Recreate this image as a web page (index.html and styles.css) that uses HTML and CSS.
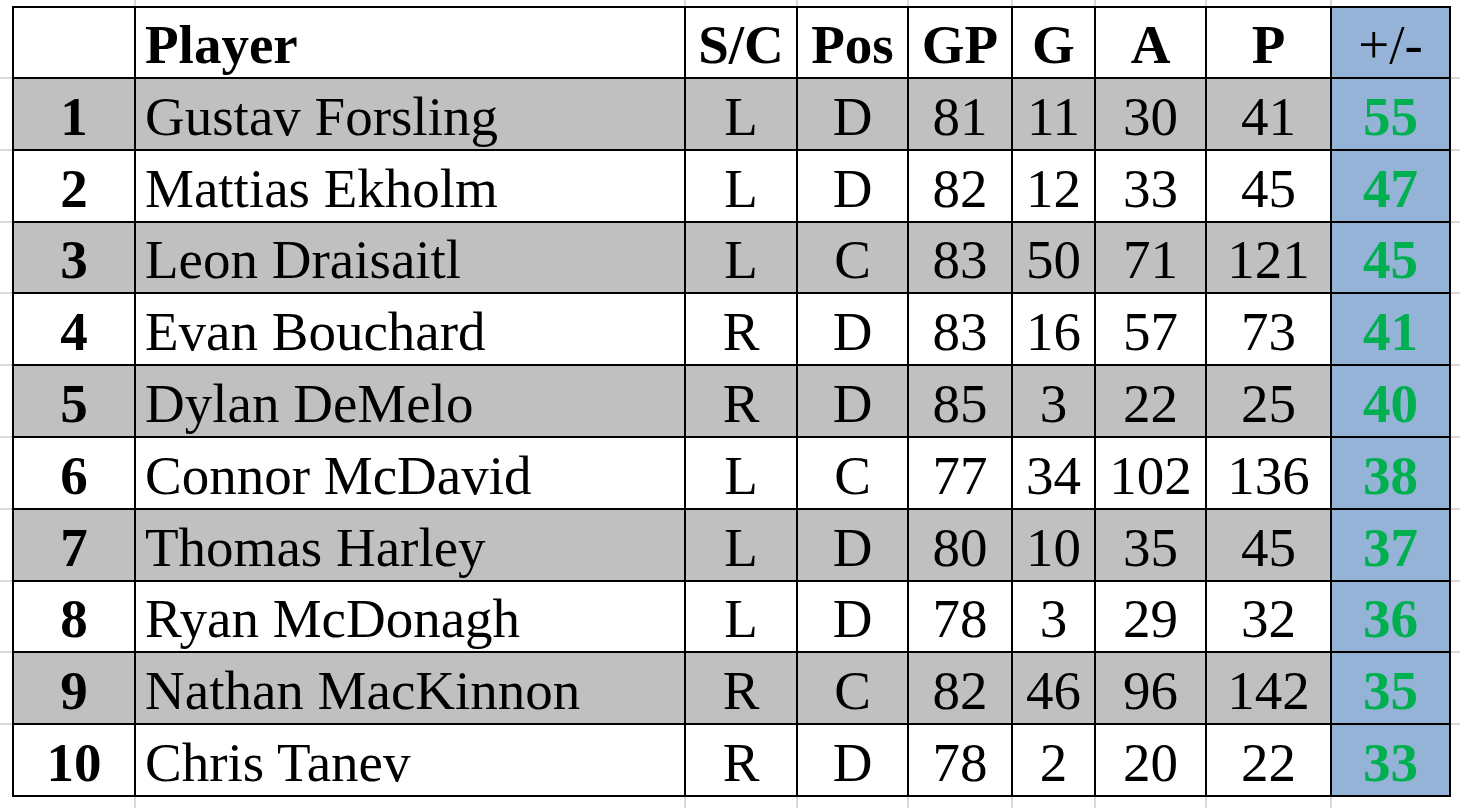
FILE: index.html
```html
<!DOCTYPE html>
<html>
<head>
<meta charset="utf-8">
<link rel="stylesheet" href="styles.css">
</head>
<body>
<div class="sheet">
  <div class="c head"></div>
  <div class="c head name b">Player</div>
  <div class="c head b">S/C</div>
  <div class="c head b">Pos</div>
  <div class="c head b">GP</div>
  <div class="c head b">G</div>
  <div class="c head b">A</div>
  <div class="c head b">P</div>
  <div class="c head pm">+/-</div>

  <div class="c g b">1</div><div class="c g name">Gustav Forsling</div><div class="c g">L</div><div class="c g">D</div><div class="c g">81</div><div class="c g">11</div><div class="c g">30</div><div class="c g">41</div><div class="c pm val">55</div>
  <div class="c b">2</div><div class="c name">Mattias Ekholm</div><div class="c">L</div><div class="c">D</div><div class="c">82</div><div class="c">12</div><div class="c">33</div><div class="c">45</div><div class="c pm val">47</div>
  <div class="c g b">3</div><div class="c g name">Leon Draisaitl</div><div class="c g">L</div><div class="c g">C</div><div class="c g">83</div><div class="c g">50</div><div class="c g">71</div><div class="c g">121</div><div class="c pm val">45</div>
  <div class="c b">4</div><div class="c name">Evan Bouchard</div><div class="c">R</div><div class="c">D</div><div class="c">83</div><div class="c">16</div><div class="c">57</div><div class="c">73</div><div class="c pm val">41</div>
  <div class="c g b">5</div><div class="c g name">Dylan DeMelo</div><div class="c g">R</div><div class="c g">D</div><div class="c g">85</div><div class="c g">3</div><div class="c g">22</div><div class="c g">25</div><div class="c pm val">40</div>
  <div class="c b">6</div><div class="c name">Connor McDavid</div><div class="c">L</div><div class="c">C</div><div class="c">77</div><div class="c">34</div><div class="c">102</div><div class="c">136</div><div class="c pm val">38</div>
  <div class="c g b">7</div><div class="c g name">Thomas Harley</div><div class="c g">L</div><div class="c g">D</div><div class="c g">80</div><div class="c g">10</div><div class="c g">35</div><div class="c g">45</div><div class="c pm val">37</div>
  <div class="c b">8</div><div class="c name">Ryan McDonagh</div><div class="c">L</div><div class="c">D</div><div class="c">78</div><div class="c">3</div><div class="c">29</div><div class="c">32</div><div class="c pm val">36</div>
  <div class="c g b">9</div><div class="c g name">Nathan MacKinnon</div><div class="c g">R</div><div class="c g">C</div><div class="c g">82</div><div class="c g">46</div><div class="c g">96</div><div class="c g">142</div><div class="c pm val">35</div>
  <div class="c b">10</div><div class="c name">Chris Tanev</div><div class="c">R</div><div class="c">D</div><div class="c">78</div><div class="c">2</div><div class="c">20</div><div class="c">22</div><div class="c pm val">33</div>
</div>
</body>
</html>
```
FILE: styles.css
```css
html, body {
  margin: 0;
  padding: 0;
}
body {
  width: 1460px;
  height: 808px;
  overflow: hidden;
  background-color: #fff;
  background-image:
    linear-gradient(90deg,
      transparent 134px, #d9d9d9 134px, #d9d9d9 136px, transparent 136px,
      transparent 684px, #d9d9d9 684px, #d9d9d9 686px, transparent 686px,
      transparent 796px, #d9d9d9 796px, #d9d9d9 798px, transparent 798px,
      transparent 907px, #d9d9d9 907px, #d9d9d9 909px, transparent 909px,
      transparent 1011px, #d9d9d9 1011px, #d9d9d9 1013px, transparent 1013px,
      transparent 1094px, #d9d9d9 1094px, #d9d9d9 1096px, transparent 1096px,
      transparent 1205px, #d9d9d9 1205px, #d9d9d9 1207px, transparent 1207px,
      transparent 1330px, #d9d9d9 1330px, #d9d9d9 1332px, transparent 1332px),
    linear-gradient(180deg,
      transparent 77px, #d9d9d9 77px, #d9d9d9 79px, transparent 79px,
      transparent 149px, #d9d9d9 149px, #d9d9d9 151px, transparent 151px,
      transparent 221px, #d9d9d9 221px, #d9d9d9 223px, transparent 223px,
      transparent 292px, #d9d9d9 292px, #d9d9d9 294px, transparent 294px,
      transparent 364px, #d9d9d9 364px, #d9d9d9 366px, transparent 366px,
      transparent 436px, #d9d9d9 436px, #d9d9d9 438px, transparent 438px,
      transparent 508px, #d9d9d9 508px, #d9d9d9 510px, transparent 510px,
      transparent 580px, #d9d9d9 580px, #d9d9d9 582px, transparent 582px,
      transparent 651px, #d9d9d9 651px, #d9d9d9 653px, transparent 653px,
      transparent 723px, #d9d9d9 723px, #d9d9d9 725px, transparent 725px);
  font-family: "Liberation Serif", "Times New Roman", serif;
  color: #000;
}
.sheet {
  display: grid;
  grid-template-columns: 120px 548px 110px 109px 102px 81px 109px 123px 117px;
  grid-template-rows: 69px;
  grid-auto-rows: 69.8px;
  gap: 2px;
  padding: 2px;
  background: #000;
  width: max-content;
  margin: 6px 0 0 12px;
}
.c {
  background: #fff;
  font-size: 55px;
  line-height: 55px;
  display: flex;
  align-items: flex-end;
  justify-content: center;
  padding-bottom: 5px;
  box-sizing: border-box;
  white-space: nowrap;
  overflow: hidden;
}
.c.g {
  background: #c0c0c0;
}
.c.name {
  justify-content: flex-start;
  padding-left: 9px;
}
.c.b {
  font-weight: bold;
}
.c.pm {
  background: #95b3d7;
}
.c.val {
  color: #00b050;
  font-weight: bold;
}
```
